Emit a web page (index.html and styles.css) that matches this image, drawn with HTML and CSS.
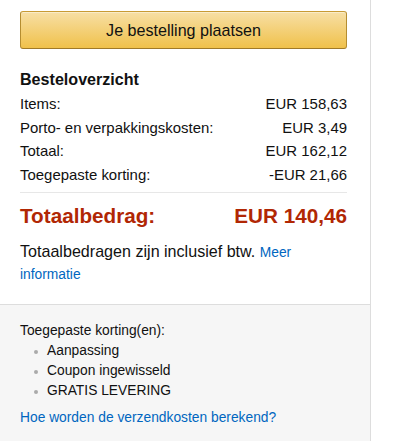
FILE: index.html
```html
<!DOCTYPE html>
<html lang="nl">
<head>
<meta charset="utf-8">
<title>Besteloverzicht</title>
<link rel="stylesheet" href="styles.css">
</head>
<body>
<div class="panel">
  <div class="main">
    <button class="place-order" type="button">Je bestelling plaatsen</button>
    <h3 class="title">Besteloverzicht</h3>
    <div class="rows">
      <div class="row"><span>Items:</span><span>EUR 158,63</span></div>
      <div class="row"><span>Porto- en verpakkingskosten:</span><span>EUR 3,49</span></div>
      <div class="row"><span>Totaal:</span><span>EUR 162,12</span></div>
      <div class="row"><span>Toegepaste korting:</span><span>-EUR 21,66</span></div>
    </div>
    <hr class="divider">
    <div class="grand"><span>Totaalbedrag:</span><span>EUR 140,46</span></div>
    <p class="vat">Totaalbedragen zijn inclusief btw. <a href="#" class="small-link">Meer informatie</a></p>
  </div>
  <div class="secondary">
    <div class="disc-label">Toegepaste korting(en):</div>
    <ul class="disc-list">
      <li>Aanpassing</li>
      <li>Coupon ingewisseld</li>
      <li>GRATIS LEVERING</li>
    </ul>
    <a href="#" class="ship-link">Hoe worden de verzendkosten berekend?</a>
  </div>
</div>
</body>
</html>
```

FILE: styles.css
```css
html, body {
  margin: 0;
  padding: 0;
  background: #fff;
}
body {
  font-family: "Liberation Sans", Arial, sans-serif;
  color: #111;
  height: 441px;
  overflow: hidden;
}
.panel {
  width: 370px;
  min-height: 441px;
  border-right: 1px solid #dddddd;
  display: flex;
  flex-direction: column;
}
.main {
  padding: 11px 23px 0 20px;
}
.place-order {
  display: block;
  width: 100%;
  height: 38px;
  margin: 0;
  padding: 0;
  border: 1px solid;
  border-color: #c89b34 #b58d30 #a07a28;
  border-radius: 3px;
  background: linear-gradient(to bottom, #f7dfa5, #f0c14b);
  font-family: "Liberation Sans", Arial, sans-serif;
  font-size: 16.1px;
  color: #111;
  line-height: 36px;
  text-align: center;
  box-shadow: inset 0 1px 0 rgba(255,255,255,0.4);
}
.title {
  margin: 19px 0 0;
  font-size: 16.1px;
  font-weight: bold;
  line-height: 22px;
  color: #111;
}
.rows {
  margin-top: 2px;
}
.row {
  display: flex;
  justify-content: space-between;
  font-size: 14.95px;
  line-height: 23.5px;
  height: 23.5px;
}
.divider {
  margin: 6px 0 0;
  border: 0;
  border-top: 1px solid #e7e7e7;
  height: 0;
}
.grand {
  display: flex;
  justify-content: space-between;
  margin-top: 9px;
  font-size: 20.7px;
  font-weight: bold;
  line-height: 28px;
  color: #b12704;
}
.vat {
  margin: 11px 0 0;
  font-size: 16.1px;
  line-height: 20px;
  padding-bottom: 19px;
}
.small-link {
  font-size: 13.8px;
  color: #0066c0;
  text-decoration: none;
}
.secondary {
  flex: 1;
  background: #f6f6f6;
  border-top: 1px solid #dddddd;
  padding: 16px 23px 0 20px;
}
.disc-label {
  font-size: 13.8px;
  line-height: 20px;
}
.disc-list {
  margin: 0;
  padding: 0 0 0 27px;
  list-style: none;
}
.disc-list li {
  position: relative;
  font-size: 13.8px;
  line-height: 20px;
}
.disc-list li::before {
  content: "";
  position: absolute;
  left: -13px;
  top: 9px;
  width: 4px;
  height: 4px;
  border-radius: 50%;
  background: #aaa;
}
.ship-link {
  display: block;
  margin-top: 7px;
  font-size: 13.8px;
  line-height: 20px;
  color: #0066c0;
  text-decoration: none;
}
```
